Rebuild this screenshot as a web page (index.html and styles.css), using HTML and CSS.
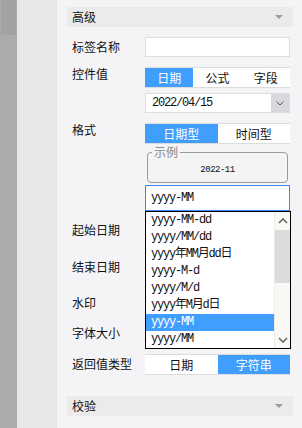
FILE: index.html
```html
<!DOCTYPE html>
<html lang="zh">
<head>
<meta charset="utf-8">
<link rel="stylesheet" href="styles.css">
</head>
<body>
<div class="rail"><div class="rail-thumb"></div></div>
<div class="side"></div>
<div class="panel">
  <div class="section"><span>高级</span><i class="caret"></i></div>

  <div class="row r-name">
    <div class="label">标签名称</div>
    <div class="ctl"><div class="input"></div></div>
  </div>

  <div class="row r-seg">
    <div class="label label-seg">控件值</div>
    <div class="ctl seg">
      <span class="seg-item active">日期</span>
      <span class="seg-item">公式</span>
      <span class="seg-item">字段</span>
    </div>
  </div>

  <div class="row r-date">
    <div class="label"></div>
    <div class="ctl select">
      <span class="select-val mono">2022/04/15</span>
      <span class="select-btn"><svg width="8" height="5" viewBox="0 0 8 5"><polyline points="0.5,0.5 4,4 7.5,0.5" fill="none" stroke="#555" stroke-width="1"/></svg></span>
    </div>
  </div>

  <div class="row r-seg">
    <div class="label label-seg">格式</div>
    <div class="ctl seg">
      <span class="seg-item active">日期型</span>
      <span class="seg-item">时间型</span>
    </div>
  </div>

  <div class="row r-sample">
    <div class="label"></div>
    <div class="ctl">
      <fieldset class="sample">
        <legend>示例</legend>
        <div class="sample-val mono">2022-11</div>
      </fieldset>
    </div>
  </div>

  <div class="row r-fmt">
    <div class="label"></div>
    <div class="ctl fmt-wrap">
      <div class="input focus mono">yyyy-MM</div>
      <div class="dropdown">
        <ul class="options mono">
          <li>yyyy-MM-dd</li>
          <li>yyyy/MM/dd</li>
          <li>yyyy年MM月dd日</li>
          <li>yyyy-M-d</li>
          <li>yyyy/M/d</li>
          <li>yyyy年M月d日</li>
          <li class="sel">yyyy-MM</li>
          <li>yyyy/MM</li>
        </ul>
        <div class="sb">
          <div class="sb-btn"><svg width="10" height="6" viewBox="0 0 10 6"><polyline points="1,5 5,1 9,5" fill="none" stroke="#666" stroke-width="1.6"/></svg></div>
          <div class="sb-track"><div class="sb-thumb"></div></div>
          <div class="sb-btn"><svg width="10" height="6" viewBox="0 0 10 6"><polyline points="1,1 5,5 9,1" fill="none" stroke="#666" stroke-width="1.6"/></svg></div>
        </div>
      </div>
    </div>
  </div>

  <div class="row r-h37"><div class="label">起始日期</div><div class="ctl"></div></div>
  <div class="row r-h37"><div class="label">结束日期</div><div class="ctl"></div></div>
  <div class="row r-h36"><div class="label">水印</div><div class="ctl"></div></div>
  <div class="row r-h24"><div class="label">字体大小</div><div class="ctl"></div></div>
  <div class="row r-h38">
    <div class="label">返回值类型</div>
    <div class="ctl seg">
      <span class="seg-item">日期</span>
      <span class="seg-item active">字符串</span>
    </div>
  </div>

  <div class="section sec2"><span>校验</span><i class="caret"></i></div>

  <div class="row r-check">
    <span class="checkbox"></span><span>必填校验</span>
  </div>
</div>
</body>
</html>
```

FILE: styles.css
```css
* { box-sizing: border-box; margin: 0; padding: 0; }
html, body { width: 302px; height: 428px; overflow: hidden; }
body {
  display: flex;
  font-family: "Noto Sans CJK SC", "Noto Sans", sans-serif;
  font-size: 12px;
  color: #111;
  background: #f4f4f6;
}
.mono {
  font-family: "Liberation Mono", "Noto Sans CJK SC", monospace;
  letter-spacing: -1.2px;
}
.rail { width: 17px; flex: none; background: #ababab; }
.rail-thumb { margin-left: 1px; width: 15px; height: 35px; background: #a2a2a2; }
.side { width: 40px; flex: none; background: #e8e8e8; }
.panel { flex: 1; padding: 7px 9px 0 10px; display: flex; flex-direction: column; }

.section {
  height: 20px; flex: none;
  background: #ebebeb;
  display: flex; align-items: center; justify-content: space-between;
  padding: 0 10px 0 5px;
  line-height: 20px;
}
.caret {
  width: 0; height: 0;
  border-left: 4px solid transparent;
  border-right: 4px solid transparent;
  border-top: 4px solid #9c9c9c;
}
.sec2 { margin-top: 13px; }

.row { display: flex; padding-left: 5px; flex: none; }
.label { width: 73px; flex: none; line-height: 20px; white-space: nowrap; }
.label-seg { line-height: 14px; }
.ctl { width: 145px; flex: none; }

.r-name { margin-top: 10px; }
.r-seg { margin-top: 10px; }
.r-date { margin-top: 5px; }
.r-sample { margin-top: 1px; }
.r-fmt { margin-top: 2px; }
.r-h37 { height: 37px; align-items: center; }
.r-h36 { height: 36px; align-items: center; }
.r-h24 { height: 24px; align-items: center; }
.r-h38 { height: 38px; align-items: center; }

.input {
  height: 20px;
  background: #fff;
  border: 1px solid #dcdcdc;
}
.input.focus {
  height: 26px;
  border-color: #3b87ef;
  padding-left: 5px;
  line-height: 24px;
}

.seg {
  display: flex;
  height: 21px;
  background: #fff;
  border-top: 1px solid #dcdcdc;
  border-bottom: 1px solid #dcdcdc;
}
.seg-item { flex: 1; text-align: center; line-height: 19px; }
.seg-item.active { background: #409eff; color: #fff; }

.select {
  display: flex;
  height: 20px;
  background: #fff;
  border: 1px solid #dcdcdc;
}
.select-val { flex: 1; padding-left: 6px; line-height: 18px; }
.select-btn {
  width: 18px; background: #d9d9dd;
  display: flex; align-items: center; justify-content: center;
}

.sample {
  margin: 0 2px;
  height: 38px;
  border: 1px solid #9a9a9a;
  border-radius: 4px;
  padding: 0;
}
.sample legend {
  margin-left: 4px;
  padding: 0 2px;
  color: #8a8a8a;
  line-height: 14px;
}
.sample-val { text-align: center; font-size: 9px; letter-spacing: -0.5px; line-height: 14px; padding-top: 4px; }

.fmt-wrap { position: relative; }
.dropdown {
  position: absolute;
  top: 100%; left: 0;
  width: 146px; height: 138px;
  border: 1px solid #000;
  background: #fff;
  display: flex;
  z-index: 2;
}
.options { list-style: none; flex: 1; }
.options li { height: 17px; line-height: 17px; padding-left: 5px; white-space: nowrap; }
.options li.sel { background: #409eff; color: #fff; }
.sb {
  width: 16px; flex: none;
  display: flex; flex-direction: column;
  background: #f8f8f5;
  border-left: 1px solid #ececec;
}
.sb-btn { height: 17px; display: flex; align-items: center; justify-content: center; flex: none; }
.sb-track { flex: 1; padding-top: 1px; }
.sb-thumb { height: 53px; background: #dcdcdc; }

.r-check { margin-top: 10px; align-items: center; gap: 8px; }
.checkbox { width: 10px; height: 10px; background: #409eff; flex: none; }
```
